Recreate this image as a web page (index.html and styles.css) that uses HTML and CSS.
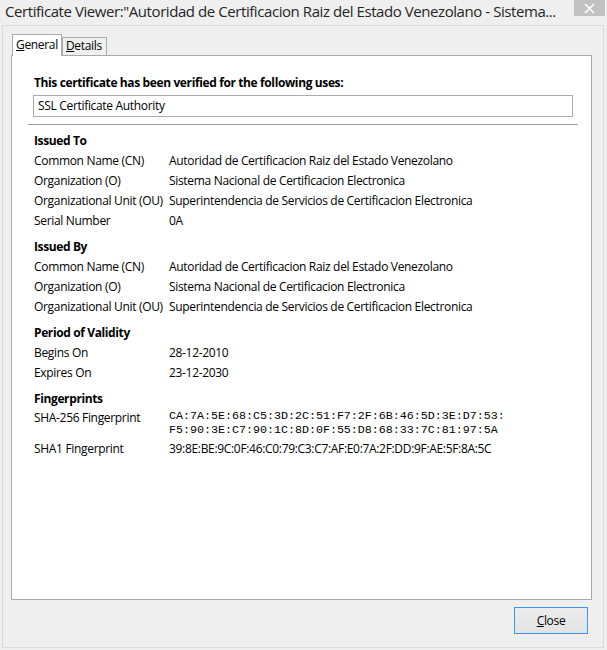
FILE: index.html
```html
<!DOCTYPE html>
<html>
<head>
<meta charset="utf-8">
<link rel="stylesheet" href="styles.css">
</head>
<body>
<div class="titlebar">
  <div class="title">Certificate Viewer:"Autoridad de Certificacion Raiz del Estado Venezolano - Sistema...</div>
  <div class="close-x"><svg width="11" height="11" viewBox="0 0 11 11"><path d="M1 1 L10 10 M10 1 L1 10" stroke="#fff" stroke-width="1.6"/></svg></div>
</div>
<div class="frame">
  <div class="tabs">
    <div class="tab active"><u>G</u>eneral</div>
    <div class="tab"><u>D</u>etails</div>
  </div>
  <div class="panel">
    <div class="heading first">This certificate has been verified for the following uses:</div>
    <div class="usebox">SSL Certificate Authority</div>
    <div class="sep"></div>

    <div class="heading">Issued To</div>
    <div class="row"><span class="lbl">Common Name (CN)</span><span class="val">Autoridad de Certificacion Raiz del Estado Venezolano</span></div>
    <div class="row"><span class="lbl">Organization (O)</span><span class="val">Sistema Nacional de Certificacion Electronica</span></div>
    <div class="row"><span class="lbl">Organizational Unit (OU)</span><span class="val">Superintendencia de Servicios de Certificacion Electronica</span></div>
    <div class="row"><span class="lbl">Serial Number</span><span class="val">0A</span></div>

    <div class="heading section">Issued By</div>
    <div class="row"><span class="lbl">Common Name (CN)</span><span class="val">Autoridad de Certificacion Raiz del Estado Venezolano</span></div>
    <div class="row"><span class="lbl">Organization (O)</span><span class="val">Sistema Nacional de Certificacion Electronica</span></div>
    <div class="row"><span class="lbl">Organizational Unit (OU)</span><span class="val">Superintendencia de Servicios de Certificacion Electronica</span></div>

    <div class="heading section">Period of Validity</div>
    <div class="row"><span class="lbl">Begins On</span><span class="val">28-12-2010</span></div>
    <div class="row"><span class="lbl">Expires On</span><span class="val">23-12-2030</span></div>

    <div class="heading section">Fingerprints</div>
    <div class="row fp"><span class="lbl">SHA-256 Fingerprint</span><span class="val mono">CA:7A:5E:68:C5:3D:2C:51:F7:2F:6B:46:5D:3E:D7:53:<br>F5:90:3E:C7:90:1C:8D:0F:55:D8:68:33:7C:81:97:5A</span></div>
    <div class="row sha1"><span class="lbl">SHA1 Fingerprint</span><span class="val">39:8E:BE:9C:0F:46:C0:79:C3:C7:AF:E0:7A:2F:DD:9F:AE:5F:8A:5C</span></div>
  </div>
  <div class="footer">
    <button class="btn"><u>C</u>lose</button>
  </div>
</div>
</body>
</html>
```
FILE: styles.css
```css
html, body {
  margin: 0;
  padding: 0;
}
body {
  width: 607px;
  height: 650px;
  background: #efefef;
  font-family: "Open Sans", "Noto Sans", sans-serif;
  font-size: 12px;
  letter-spacing: -0.32px;
  color: #000;
  overflow: hidden;
}
.titlebar {
  height: 25px;
  display: flex;
  justify-content: space-between;
  align-items: flex-start;
}
.title {
  padding-left: 5px;
  font-size: 15px;
  line-height: 22px;
  color: #262626;
  white-space: nowrap;
  letter-spacing: -0.43px;
}
.close-x {
  width: 31px;
  height: 16px;
  margin-right: 2px;
  background: #c1c1c1;
  display: flex;
  align-items: center;
  justify-content: center;
}
.frame {
  margin: 0 3px 2px 2px;
  border: 1px solid #dadada;
  height: 621px;
  display: flex;
  flex-direction: column;
}
.tabs {
  display: flex;
  align-items: flex-end;
  height: 21px;
  margin: 8px 0 0 9px;
  position: relative;
  z-index: 1;
}
.tab {
  box-sizing: border-box;
  border: 1px solid #acacac;
  border-bottom: none;
  height: 18px;
  padding: 0 4px 0 3px;
  line-height: 16px;
  background: #f0f0f0;
}
.tab.active {
  height: 22px;
  margin-bottom: -1px;
  background: #fff;
  padding: 0 3px;
  line-height: 20px;
}
.panel {
  box-sizing: border-box;
  margin: 0 11px 0 8px;
  height: 545px;
  border: 1px solid #a9a9a9;
  background: #fff;
  padding: 17px 13px 0 16px;
}
.heading {
  font-weight: 700;
  line-height: 20px;
  padding-left: 6px;
  margin-top: 6px;
  letter-spacing: -0.38px;
}
.heading.first {
  margin-top: 0;
}
.usebox {
  margin: 2px 5px 0 5px;
  height: 20px;
  border: 1px solid #ababab;
  line-height: 20px;
  padding-left: 4px;
}
.sep {
  margin-top: 7px;
  height: 1px;
  background: #a0a0a0;
}
.row {
  display: flex;
  line-height: 20px;
  padding-left: 6px;
}
.lbl {
  width: 135px;
  flex: none;
  white-space: nowrap;
}
.val {
  white-space: nowrap;
}
.mono {
  font-family: "Liberation Mono", monospace;
  font-size: 11.67px;
  letter-spacing: 0;
  line-height: 14px;
  color: #000;
}
.row.fp .lbl {
  line-height: 18px;
}
.row.sha1 {
  margin-top: 2px;
}
.footer {
  display: flex;
  justify-content: flex-end;
  padding: 7px 15px 0 0;
}
.btn {
  width: 74px;
  height: 27px;
  border: 1px solid #3c96ef;
  background: linear-gradient(#ececec, #e3e3e3);
  font-family: "Open Sans", "Noto Sans", sans-serif;
  font-size: 12px;
  letter-spacing: -0.32px;
  color: #000;
  padding: 0;
}
```
